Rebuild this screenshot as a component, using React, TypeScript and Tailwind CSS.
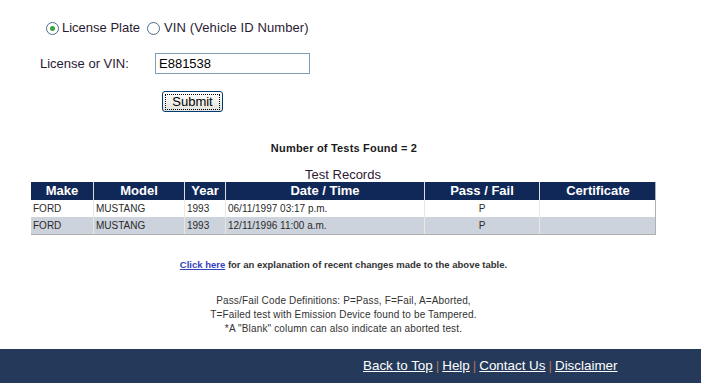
export default function App() {
  const rows = [
    { make: "FORD", model: "MUSTANG", year: "1993", date: "06/11/1997 03:17 p.m.", pf: "P", alt: false },
    { make: "FORD", model: "MUSTANG", year: "1993", date: "12/11/1996 11:00 a.m.", pf: "P", alt: true },
  ];

  return (
    <div className="w-[701px] h-[383px] bg-white flex flex-col font-['Liberation_Sans',Arial,sans-serif] text-[#2b1a33] overflow-hidden">
      {/* Search form */}
      <div className="flex items-center pl-[46px] pt-[19px] text-[13px] h-[37px]">
        <span className="w-[13px] h-[13px] rounded-full border border-[#4a6a8a] bg-white flex items-center justify-center mr-[3px]">
          <span className="w-[5px] h-[5px] rounded-full bg-[#3aa53a]" />
        </span>
        <span>License Plate</span>
        <span className="w-[13px] h-[13px] rounded-full border border-[#4a6a8a] bg-white ml-[7px] mr-[4px]" />
        <span className="tracking-[0.1px]">VIN (Vehicle ID Number)</span>
      </div>

      <div className="flex items-center pl-[40px] mt-[16px] text-[13px]">
        <span className="w-[115px]">License or VIN:</span>
        <div className="w-[155px] h-[21px] border border-[#7f9db9] flex items-center pl-[3px] text-[13px] text-black">
          E881538
        </div>
      </div>

      <div className="pl-[162px] mt-[17px]">
        <button className="w-[61px] h-[21px] rounded-[3px] border border-[#003c74] bg-gradient-to-b from-white to-[#e3e3db] text-[13px] text-black flex items-center justify-center">
          <span className="border border-dotted border-black px-[6px] leading-[14px]">Submit</span>
        </button>
      </div>

      <p className="text-center font-bold text-[11px] tracking-[0.2px] text-[#1a1a1a] mt-[28px] w-[688px]">
        Number of Tests Found = 2
      </p>

      <p className="text-center text-[13px] mt-[10px] w-[686px] leading-[15px]">Test Records</p>

      {/* Records table */}
      <div className="ml-[31px] w-[625px] border-r border-b border-[#b0b0b0]">
        <div className="grid grid-cols-[63px_91px_41px_199px_115px_116px] bg-[#0f2858] text-white font-bold text-[13px] h-[18px] leading-[18px]">
          <div className="text-center border-r border-[#dcdcdc]">Make</div>
          <div className="text-center border-r border-[#dcdcdc]">Model</div>
          <div className="text-center border-r border-[#dcdcdc]">Year</div>
          <div className="text-center border-r border-[#dcdcdc]">Date / Time</div>
          <div className="text-center border-r border-[#dcdcdc]">Pass / Fail</div>
          <div className="text-center">Certificate</div>
        </div>
        {rows.map((r, i) => (
          <div
            key={i}
            className={`grid grid-cols-[63px_91px_41px_199px_115px_116px] text-[10px] text-[#2a2a2a] h-[17px] leading-[17px] ${r.alt ? "bg-[#cdd3dc]" : "bg-white"}`}
          >
            <div className="pl-[2px] border-r border-[#e8e8e0]">{r.make}</div>
            <div className="pl-[2px] border-r border-[#e8e8e0]">{r.model}</div>
            <div className="pl-[2px] border-r border-[#e8e8e0]">{r.year}</div>
            <div className="pl-[2px] border-r border-[#e8e8e0]">{r.date}</div>
            <div className="text-center text-[#2a2a2a] border-r border-[#e8e8e0]">{r.pf}</div>
            <div />
          </div>
        ))}
      </div>

      <p className="text-center text-[9.5px] font-bold text-[#333] mt-[23px] w-[687px]">
        <a href="#" className="underline text-[#3344bb]">Click here</a> for an explanation of recent changes made to the above table.
      </p>

      <div className="text-center text-[10px] tracking-[0.15px] text-[#333] mt-[22px] w-[687px] leading-[14px]">
        <p>Pass/Fail Code Definitions: P=Pass, F=Fail, A=Aborted,</p>
        <p>T=Failed test with Emission Device found to be Tampered.</p>
        <p>*A "Blank" column can also indicate an aborted test.</p>
      </div>

      {/* Footer */}
      <div className="mt-auto h-[34px] bg-[#253a5a] flex items-center pl-[363px] text-[13.4px] text-white">
        <a href="#" className="underline">Back to Top</a>
        <span className="text-[#b07050] px-[3px]">|</span>
        <a href="#" className="underline">Help</a>
        <span className="text-[#b07050] px-[3px]">|</span>
        <a href="#" className="underline">Contact Us</a>
        <span className="text-[#b07050] px-[3px]">|</span>
        <a href="#" className="underline">Disclaimer</a>
      </div>
    </div>
  );
}
